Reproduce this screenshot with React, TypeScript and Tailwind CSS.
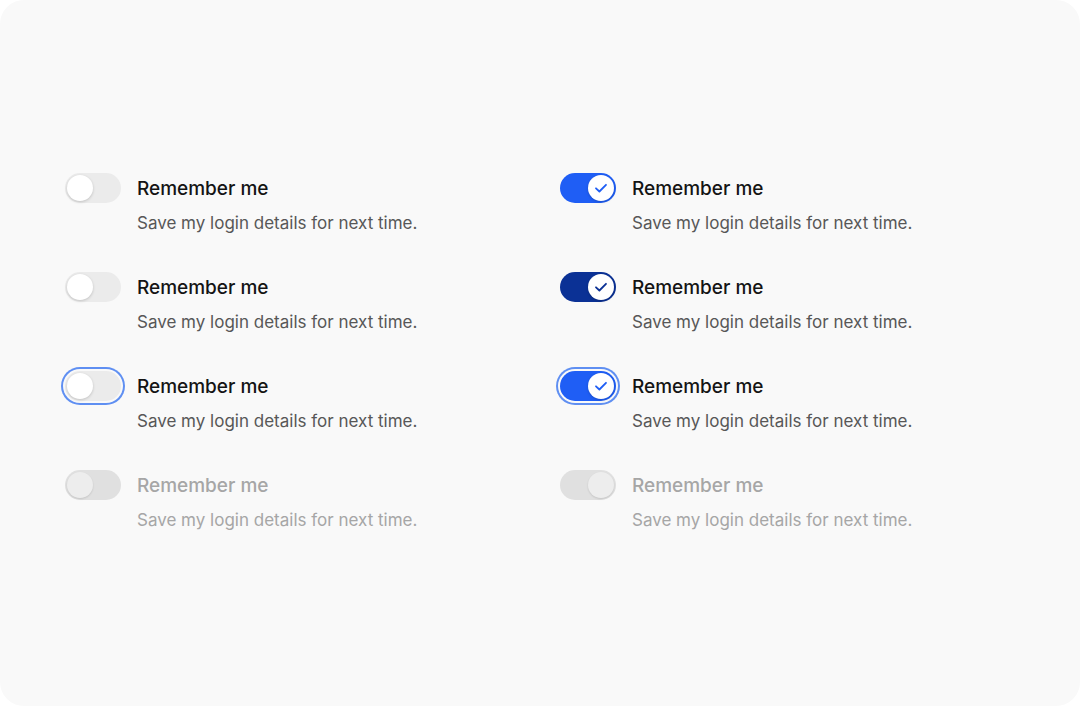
import React from 'react';

type State = 'default' | 'hover' | 'focus' | 'disabled';

const Check = ({ color }: { color: string }) => (
  <svg width="16" height="16" viewBox="0 0 16 16" fill="none">
    <path d="M3 8.3 6.4 11.5 13 4.8" stroke={color} strokeWidth="1.8" strokeLinecap="round" strokeLinejoin="round" />
  </svg>
);

const Toggle = ({ on, state }: { on: boolean; state: State }) => {
  let track = 'bg-[#ebebeb]';
  let thumb = 'bg-white shadow-[0_1px_3px_rgba(0,0,0,0.18)]';
  let checkColor = '#1f5ef5';
  if (on) {
    track = state === 'hover' ? 'bg-[#0b3195]' : 'bg-[#1f5ef5]';
    checkColor = state === 'hover' ? '#0b3195' : '#1f5ef5';
  }
  if (state === 'disabled') {
    track = 'bg-[#e0e0e0]';
    thumb = 'bg-[#ededed] shadow-[0_1px_2px_rgba(0,0,0,0.12)]';
  }
  const ring = state === 'focus' ? 'ring-2 ring-[#5f8ff2] ring-offset-2 ring-offset-[#f9f9f9]' : '';
  return (
    <div className={`flex h-[30px] w-[56px] shrink-0 items-center rounded-full p-[2px] ${track} ${ring} ${on ? 'justify-end' : 'justify-start'}`}>
      <div className={`flex h-[26px] w-[26px] items-center justify-center rounded-full ${thumb}`}>
        {on && state !== 'disabled' && <Check color={checkColor} />}
      </div>
    </div>
  );
};

const Item = ({ on, state }: { on: boolean; state: State }) => {
  const dis = state === 'disabled';
  return (
    <div className="flex items-start gap-4">
      <Toggle on={on} state={state} />
      <div className="flex flex-col pt-[1px]">
        <span className={`text-[19px] leading-[30px] font-medium ${dis ? 'text-[#a6a6a6]' : 'text-[#141414]'}`}>Remember me</span>
        <span className={`mt-[7px] text-[17px] leading-[24px] ${dis ? 'text-[#a6a6a6]' : 'text-[#575757]'}`}>Save my login details for next time.</span>
      </div>
    </div>
  );
};

const states: State[] = ['default', 'hover', 'focus', 'disabled'];

export default function App() {
  return (
    <div className="h-[706px] w-[1080px] bg-white" style={{ fontFamily: 'Inter, "Noto Sans", sans-serif' }}>
      <div className="h-full w-full rounded-[24px] bg-[#f9f9f9] pl-[65px] pt-[173px]">
        <div className="grid grid-cols-[495px_1fr] gap-y-[37px]">
          {states.map((s) => (
            <React.Fragment key={s}>
              <Item on={false} state={s} />
              <Item on={true} state={s} />
            </React.Fragment>
          ))}
        </div>
      </div>
    </div>
  );
}
